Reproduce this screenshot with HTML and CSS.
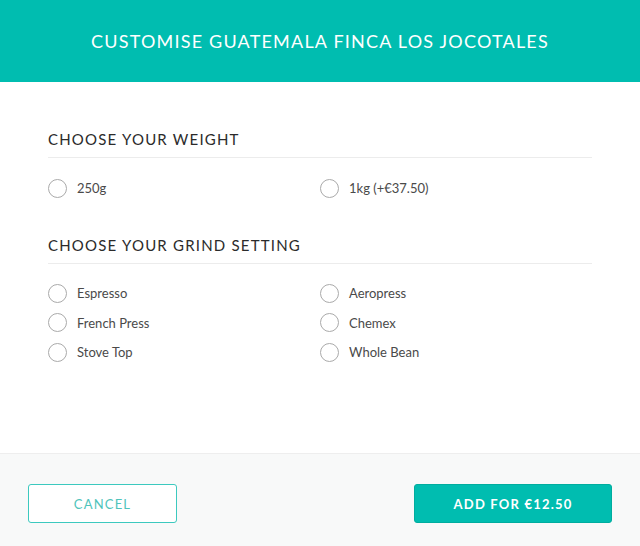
FILE: index.html
```html
<!DOCTYPE html>
<html lang="en">
<head>
    <meta charset="UTF-8">
    <meta name="viewport" content="width=device-width, initial-scale=1.0">
    <title>Customise</title>
    <link rel="stylesheet" href="styles.css">
</head>
<body>
    <div class="modal">
        <div class="modal-header">
            <h1>Customise Guatemala Finca Los Jocotales</h1>
        </div>

        <div class="modal-body">
            <div class="option-group">
                <h2>Choose your weight</h2>
                <div class="options">
                    <label class="option"><input type="radio" name="weight"><span class="radio"></span>250g</label>
                    <label class="option"><input type="radio" name="weight"><span class="radio"></span>1kg (+€37.50)</label>
                </div>
            </div>

            <div class="option-group">
                <h2>Choose your grind setting</h2>
                <div class="options">
                    <label class="option"><input type="radio" name="grind"><span class="radio"></span>Espresso</label>
                    <label class="option"><input type="radio" name="grind"><span class="radio"></span>Aeropress</label>
                    <label class="option"><input type="radio" name="grind"><span class="radio"></span>French Press</label>
                    <label class="option"><input type="radio" name="grind"><span class="radio"></span>Chemex</label>
                    <label class="option"><input type="radio" name="grind"><span class="radio"></span>Stove Top</label>
                    <label class="option"><input type="radio" name="grind"><span class="radio"></span>Whole Bean</label>
                </div>
            </div>
        </div>

        <div class="modal-footer">
            <button type="button" class="btn btn-outline">Cancel</button>
            <button type="button" class="btn btn-primary">Add for €12.50</button>
        </div>
    </div>
</body>
</html>
```

FILE: styles.css
```css
body {
    font-family: Lato, "Open Sans", sans-serif;
    background-color: #fff;
    color: #333;
    margin: 0;
    padding: 0;
}

.modal {
    display: flex;
    flex-direction: column;
    height: 546px;
}

.modal-header {
    height: 82px;
    background-color: #00bdb0;
    display: flex;
    align-items: center;
    justify-content: center;
}

.modal-header h1 {
    margin: 0;
    color: #fff;
    font-size: 18px;
    font-weight: 400;
    letter-spacing: 1.2px;
    text-transform: uppercase;
}

.modal-body {
    flex: 1;
    padding: 48px 48px 0;
}

.option-group {
    margin-bottom: 38px;
}

.option-group h2 {
    margin: 0;
    padding-bottom: 9px;
    border-bottom: 1px solid #ececec;
    font-size: 15px;
    font-weight: 400;
    letter-spacing: 1.2px;
    text-transform: uppercase;
    color: #2b2b2b;
}

.options {
    display: grid;
    grid-template-columns: 272px 1fr;
    padding-top: 20px;
    row-gap: 9.5px;
}

.option-group + .option-group .options {
    padding-top: 19px;
}

.option {
    display: flex;
    align-items: center;
    height: 20px;
    font-size: 13px;
    color: #4a4a4a;
    cursor: pointer;
}

.option input {
    display: none;
}

.radio {
    width: 17px;
    height: 17px;
    border: 1.5px solid #aaa;
    border-radius: 50%;
    margin-right: 10px;
    flex-shrink: 0;
}

.option input:checked + .radio {
    border-color: #00bdb0;
    box-shadow: inset 0 0 0 4px #fff;
    background-color: #00bdb0;
}

.modal-footer {
    height: 93px;
    background-color: #f8f9f9;
    border-top: 1px solid #eeeeee;
    display: flex;
    align-items: flex-start;
    justify-content: space-between;
    padding: 30px 28px 0;
    box-sizing: border-box;
}

.btn {
    height: 39px;
    border-radius: 3px;
    font-family: Lato, sans-serif;
    font-size: 13px;
    letter-spacing: 1.2px;
    text-transform: uppercase;
    cursor: pointer;
}

.btn-outline {
    width: 149px;
    background-color: #fff;
    border: 1px solid #3cc9bf;
    color: #4fc4bb;
}

.btn-primary {
    width: 198px;
    background-color: #00bdb0;
    border: 1px solid #00ad9f;
    color: #fff;
    font-weight: 700;
}
```
